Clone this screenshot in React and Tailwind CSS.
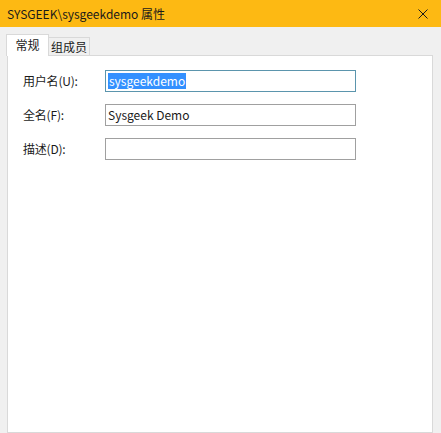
function Field({ label, children, focused }) {
  return (
    <div className="flex h-[22px] items-center">
      <span className="w-[97px] pl-[15px] text-[12px] tracking-[-0.2px] text-[#1a1a1a]">{label}</span>
      <div
        className={`flex h-[22px] w-[251px] items-center border bg-white px-[2px] text-[12px] text-[#1a1a1a] ${
          focused ? "border-[#5b95ad]" : "border-[#a0a0a0]"
        }`}
      >
        {children}
      </div>
    </div>
  );
}

export default function App() {
  return (
    <div
      className="flex h-[433px] w-[441px] flex-col overflow-hidden bg-[#f0f0f0]"
      style={{ fontFamily: '"Noto Sans CJK SC", "Noto Sans", sans-serif' }}
    >
      <div className="flex h-[27px] shrink-0 items-center justify-between bg-[#fdb913] pl-[7px] pr-[13px]">
        <span className="text-[12px] text-[#1a1a1a]">SYSGEEK\sysgeekdemo 属性</span>
        <svg width="10" height="10" viewBox="0 0 10 10" className="text-[#1a1a1a]">
          <path d="M0.5 0.5 L9.5 9.5 M9.5 0.5 L0.5 9.5" stroke="currentColor" strokeWidth="1" />
        </svg>
      </div>

      <div className="flex h-[28px] shrink-0 items-end pl-[6px]">
        <div className="relative z-10 mb-[-1px] flex h-[22px] w-[43px] items-center justify-center border border-b-0 border-[#d9d9d9] bg-white pb-[2px] text-[12px] text-[#1a1a1a]">
          常规
        </div>
        <div className="flex h-[18px] w-[41px] items-center justify-center border border-b-0 border-l-0 border-[#d9d9d9] bg-[#f0f0f0] text-[12px] text-[#1a1a1a]">
          组成员
        </div>
      </div>

      <div className="ml-[7px] w-[426px] flex-1 border border-[#d9d9d9] bg-white">
        <div className="flex flex-col gap-[12px] pt-[14px]">
          <Field label="用户名(U):" focused>
            <span className="bg-[#3390ff] px-[1px] leading-[16px] text-white">sysgeekdemo</span>
          </Field>
          <Field label="全名(F):">Sysgeek Demo</Field>
          <Field label="描述(D):" />
        </div>
      </div>
    </div>
  );
}
